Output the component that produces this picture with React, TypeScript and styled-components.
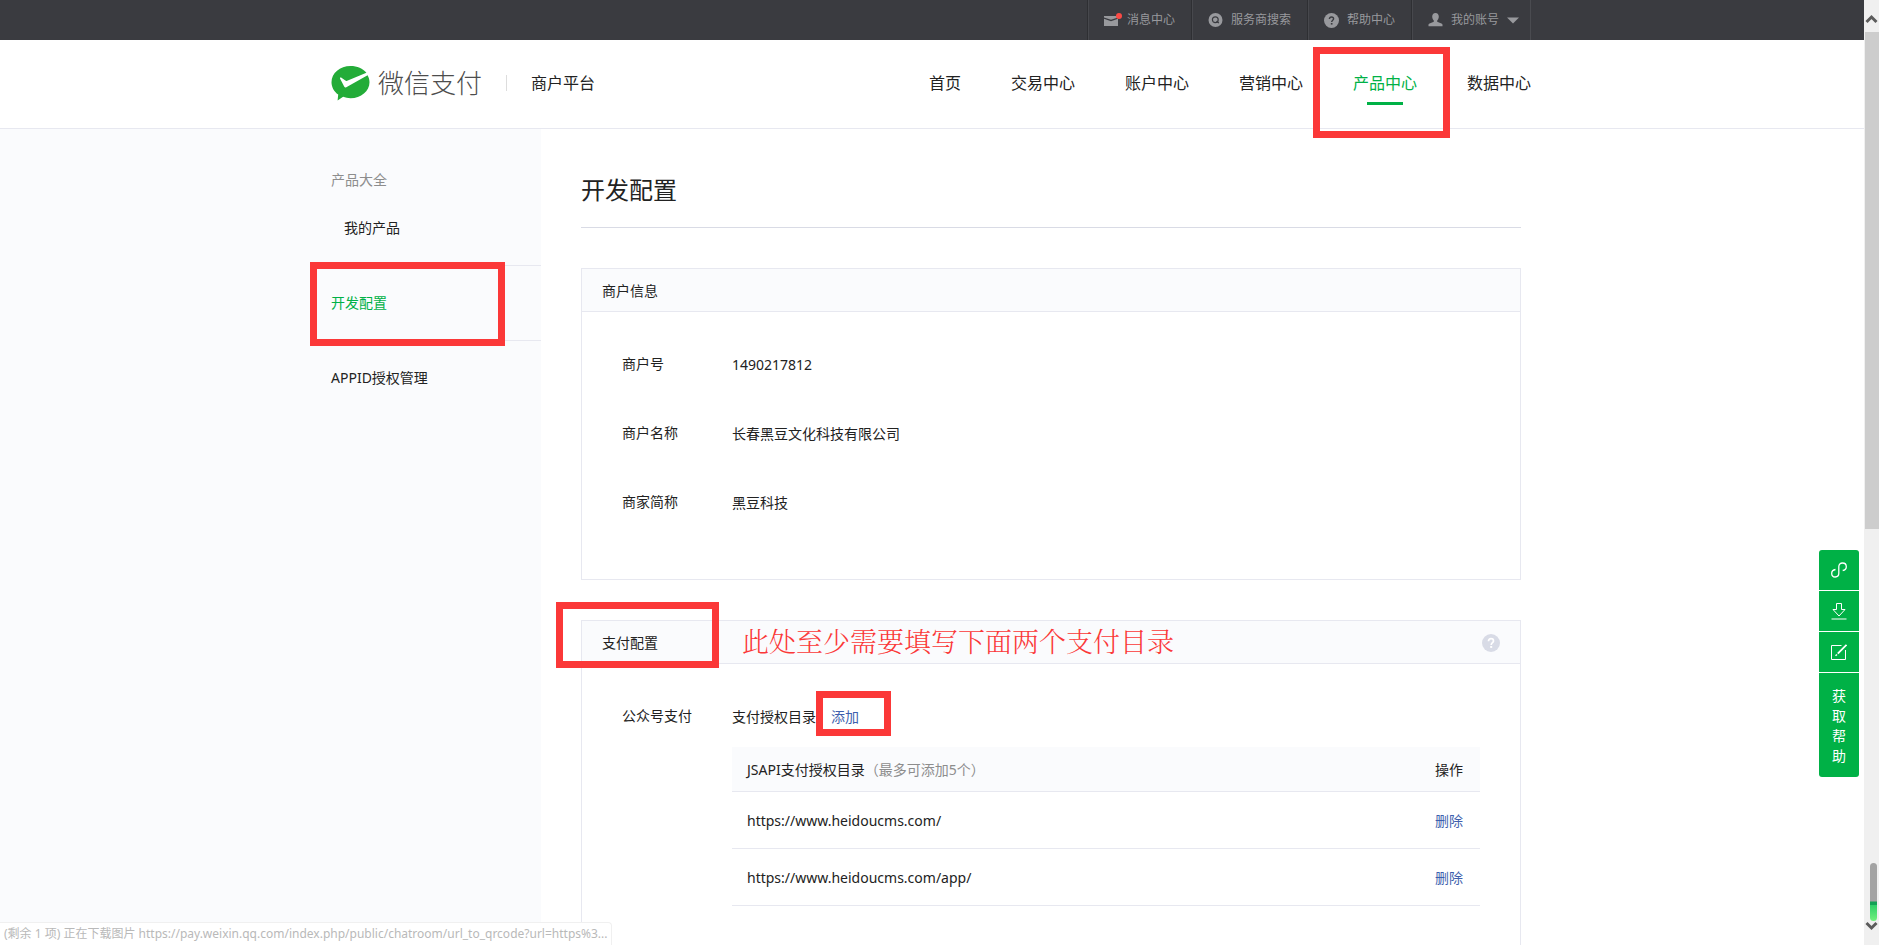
import React from "react";
import styled, { createGlobalStyle, css } from "styled-components";

const GREEN = "#00b146";
const RED = "#fb3838";
const LINE = "#e7e8f0";
const TINT = "#fafbfd";

const GlobalStyle = createGlobalStyle`
  * { box-sizing: border-box; }
  body {
    margin: 0;
    background: #fff;
    color: #222;
    font: 14px/20px "Noto Sans", "Noto Sans CJK SC", sans-serif;
  }
  a { color: inherit; text-decoration: none; }
  button { border: 0; padding: 0; background: none; font: inherit; color: inherit; cursor: pointer; }
  h1, h2, dl, dt, dd, ul, p { margin: 0; padding: 0; font-weight: 400; }
  ul { list-style: none; }
`;

const Shell = styled.div`
  display: flex;
  height: 100vh;
  overflow: hidden;
`;

const Page = styled.div`
  flex: 1;
  min-width: 0;
  display: flex;
  flex-direction: column;
`;

const Container = styled.div`
  width: 100%;
  max-width: 1202px;
  margin: 0 auto;
  padding-right: 2px;
  display: flex;
`;

const TopBar = styled.div`
  flex: none;
  background: #3a3b40;
  color: #98999d;
  font-size: 12px;
`;

const TopList = styled.ul`
  display: flex;
  margin-left: auto;
  border-right: 1px solid #4a4b50;
`;

const TopItem = styled.li`
  border-left: 1px solid #2e2f33;
  box-shadow: inset 1px 0 #47484d;
  a, button {
    display: flex;
    align-items: center;
    height: 40px;
    padding: 0 16px;
    gap: 8px;
  }
  button { padding-right: 11px; }
  svg { overflow: visible; }
`;

const Header = styled.header`
  flex: none;
  border-bottom: 1px solid ${LINE};
`;

const HeaderRow = styled(Container)`
  height: 88px;
  padding-bottom: 2px;
  align-items: center;
`;

const Brand = styled.a`
  display: flex;
  align-items: center;
`;

const BrandName = styled.span`
  margin-left: 8px;
  font-size: 26px;
  line-height: 32px;
  font-weight: 300;
  color: #4d4d4d;
`;

const BrandSite = styled.span`
  margin-left: 24px;
  padding-left: 24px;
  font-size: 16px;
  line-height: 16px;
  border-left: 1px solid #ddd;
`;

const Nav = styled.nav`
  display: flex;
  gap: 50px;
  margin-left: auto;
`;

const NavLink = styled.a<{ $active?: boolean }>`
  position: relative;
  font-size: 16px;
  line-height: 24px;
  ${(p) =>
    p.$active &&
    css`
      color: ${GREEN};
      &::after {
        content: "";
        position: absolute;
        left: 14px;
        top: 31px;
        width: 36px;
        height: 3px;
        background: ${GREEN};
      }
    `}
`;

const Mark = styled.span<{ $x: number; $y: number; $w: number; $h: number }>`
  position: absolute;
  z-index: 2;
  left: ${(p) => p.$x}px;
  top: ${(p) => p.$y}px;
  width: ${(p) => p.$w}px;
  height: ${(p) => p.$h}px;
  border: 7px solid ${RED};
  pointer-events: none;
`;

const Body = styled.div`
  flex: 1;
  display: flex;
`;

const Sidebar = styled.aside`
  width: calc(50% - 391px);
  min-width: 210px;
  display: flex;
  justify-content: flex-end;
  background: ${TINT};
`;

const Menu = styled.ul`
  width: 210px;
  padding-top: 40px;
`;

const MenuGroup = styled.li`
  position: relative;
  & + & {
    padding: 26px 0;
    border-top: 1px solid ${LINE};
  }
  &:first-child {
    height: 96px;
  }
`;

const MenuTitle = styled.p`
  line-height: 22px;
  color: #8d8d8d;
`;

const MenuLink = styled.a<{ $active?: boolean; $sub?: boolean }>`
  display: block;
  line-height: 22px;
  ${(p) => p.$active && `color: ${GREEN};`}
  ${(p) => p.$sub && "margin: 26px 0 0 13px;"}
`;

const Main = styled.main`
  flex: 1;
  max-width: 980px;
  padding: 40px 0 0 40px;
`;

const Title = styled.h1`
  font-size: 24px;
  line-height: 42px;
  padding-bottom: 16px;
  border-bottom: 1px solid #d9dbe5;
  margin-bottom: 40px;
`;

const Card = styled.section<{ $tall?: boolean }>`
  border: 1px solid ${LINE};
  margin-bottom: 40px;
  min-height: ${(p) => (p.$tall ? 480 : 312)}px;
`;

const CardHead = styled.div`
  position: relative;
  display: flex;
  align-items: center;
  height: 43px;
  padding: 2px 20px 0;
  background: ${TINT};
  border-bottom: 1px solid ${LINE};
  button { margin-left: auto; height: 18px; display: flex; }
`;

const CardTitle = styled.h2`
  font-size: 14px;
  line-height: 20px;
`;

const Note = styled.span`
  position: absolute;
  z-index: 2;
  left: 160px;
  top: 2px;
  font-size: 27px;
  line-height: 36px;
  font-family: "Noto Serif CJK SC", "Noto Sans CJK SC", serif;
  font-weight: 300;
  color: ${RED};
  white-space: nowrap;
`;

const Fields = styled.dl`
  padding: 42px 40px 0;
`;

const Field = styled.div`
  display: flex;
  margin-bottom: 48px;
  dt { width: 110px; flex: none; }
  dd { flex: 1; padding-top: 1px; }
`;

const AddLink = styled.a`
  position: relative;
  margin-left: 15px;
  color: #3e5fae;
`;

const DirTable = styled.table`
  width: 100%;
  margin-top: 20px;
  border-collapse: collapse;
  th, td {
    padding: 2px 15px 0;
    height: 57px;
    text-align: left;
    font-weight: 400;
    border-bottom: 1px solid ${LINE};
  }
  th { height: 44px; background: ${TINT}; }
  th:last-child, td:last-child { width: 60px; }
  small { font-size: 14px; color: #8d8d8d; }
  button { color: #3e5fae; }
`;

const Rail = styled.div`
  flex: none;
  width: 15px;
  background: #f0f0f0;
  display: flex;
  flex-direction: column;
  align-items: center;
  padding: 14px 0;
`;

const Thumb = styled.div`
  width: 100%;
  height: 497px;
  margin-top: 8px;
  border-left: 1px solid #f0f0f0;
  background: #cdcdcd;
`;

const Meter = styled.div`
  width: 7px;
  height: 58px;
  margin: auto 0 0 3px;
  border-radius: 4px;
  background: linear-gradient(#a3a3a3 38px, #12a155 39px, #12a155 42px, #2ecf68 42px, #74f07e);
`;

const HelpDock = styled.div`
  position: fixed;
  z-index: 3;
  right: 20px;
  top: 550px;
  width: 40px;
  display: flex;
  flex-direction: column;
  gap: 1px;
  border-radius: 3px;
  overflow: hidden;
  background: #fff;
`;

const DockButton = styled.button<{ $text?: boolean }>`
  && {
    display: flex;
    align-items: center;
    justify-content: center;
    height: ${(p) => (p.$text ? 104 : 40)}px;
    padding: ${(p) => (p.$text ? 2 : 0)}px 12px 0;
    color: #fff;
    background: ${GREEN};
    line-height: 20px;
  }
`;

const StatusBar = styled.div`
  position: fixed;
  left: 0;
  bottom: 0;
  z-index: 3;
  height: 23px;
  padding: 0 3px 0 4px;
  font-size: 12px;
  line-height: 22px;
  color: #b9b9b9;
  background: #fff;
  border: 1px solid #f0f0f0;
  border-width: 1px 1px 0 0;
  border-radius: 0 4px 0 0;
  white-space: nowrap;
`;

const MailIcon = () => (
  <svg width="15" height="18" viewBox="0 0 15 18">
    <path d="M0 5h14v1.500L7 8.800 0 6.500z" fill="#98999d" />
    <path d="M0 7.800l7 2.400 7-2.400V15H0z" fill="#98999d" />
    <circle cx="15" cy="5" r="3" fill="#fb4a45" />
  </svg>
);

const SearchIcon = () => (
  <svg width="15" height="15" viewBox="0 0 15 15">
    <circle cx="7.500" cy="7" r="7" fill="#98999d" />
    <circle cx="7.300" cy="6.800" r="2.900" fill="none" stroke="#3a3b40" strokeWidth="1.200" />
    <path d="M8.500 8.200l2.400 1.800" stroke="#3a3b40" strokeWidth="1.200" />
  </svg>
);

const QuestionIcon = ({ size, fill, ink }: { size: number; fill: string; ink: string }) => (
  <svg width={size} height={size} viewBox="0 0 18 18">
    <circle cx="9" cy="9" r="9" fill={fill} />
    <path d="M6.500 7.200C6.500 5.500 7.500 4.700 9 4.700s2.500.9 2.500 2.200c0 1.700-2.300 1.900-2.300 4" fill="none" stroke={ink} strokeWidth="1.700" />
    <rect x="8.200" y="12" width="2" height="1.900" fill={ink} />
  </svg>
);

const UserIcon = () => (
  <svg width="15" height="14" viewBox="0 0 15 14">
    <path d="M7.500 0c2.100 0 3.300 1.500 3.300 3.600 0 1.700-.7 3.100-1.600 3.900v1.300l4.200 1.600c.8.3 1.100.8 1.100 1.600v1.200H.5V12c0-.8.3-1.300 1.100-1.600l4.200-1.600V7.500C4.900 6.700 4.200 5.300 4.200 3.600 4.200 1.500 5.400 0 7.500 0z" fill="#98999d" />
  </svg>
);

const CaretIcon = () => (
  <svg width="12" height="6" viewBox="0 0 12 6">
    <path d="M0 .5h12l-6 6z" fill="#98999d" />
  </svg>
);

const LogoIcon = () => (
  <svg width="39" height="35" viewBox="0 0 39 35">
    <path d="M19.500 0C9 0 .5 7.200.5 16.200c0 5 2.600 9.400 6.700 12.300L6.600 34.500l5.500-3.700c2.300.9 4.800 1.400 7.400 1.400 10.500 0 19-7.100 19-16 0-2.500-.7-4.900-1.900-7L15.300 21.200c-.8.400-1.500.3-2-.5L9 12.400c-.3-.8.400-1.300 1.100-.8l4.300 3c.6.400 1.200.4 1.800.1L35.400 6.800C32 2.700 26.200 0 19.500 0z" fill="#23ac38" />
  </svg>
);

const LinkIcon = () => (
  <svg width="16" height="16" viewBox="0 0 16 16" fill="none" stroke="#fff" strokeWidth="1.300">
    <path d="M4.500 7.500C2 7.900.7 9.200.7 11.200c0 2.300 1.500 3.800 3.500 3.800S7.800 13.500 7.800 11.300V4.700C7.800 2.500 9.300 1 11.500 1s3.800 1.500 3.800 3.700c0 2-1.300 3.400-3.600 3.800" />
  </svg>
);

const DownloadIcon = () => (
  <svg width="16" height="18" viewBox="0 0 16 18" fill="none" stroke="#fff">
    <path d="M5.500 1.500h5v6H14L8 14 2 7.500h3.500zM.5 17h15" />
  </svg>
);

const EditIcon = () => (
  <svg width="16" height="16" viewBox="0 0 16 16" fill="none" stroke="#fff">
    <path d="M10.500 1.500h-10v14h14V6" />
    <path d="M15.500.8L6.800 9.700" strokeWidth="1.800" />
    <path d="M6 10.500l-1.500 1.300" strokeWidth="1.500" />
  </svg>
);

const Chevron = ({ up }: { up?: boolean }) => (
  <svg width="13" height="10" viewBox="0 0 13 10">
    <path d={up ? "M1.500 8L6.500 3l5 5" : "M1.500 2l5 5 5-5"} fill="none" stroke="#5c5c5c" strokeWidth="3" />
  </svg>
);

const NAV = ["首页", "交易中心", "账户中心", "营销中心", "产品中心", "数据中心"];

const MERCHANT = [
  ["商户号", "1490217812"],
  ["商户名称", "长春黑豆文化科技有限公司"],
  ["商家简称", "黑豆科技"],
];

const DIRECTORIES = ["https://www.heidoucms.com/", "https://www.heidoucms.com/app/"];

export default function App() {
  return (
    <Shell>
      <GlobalStyle />
      <Page>
        <TopBar>
          <Container>
            <TopList>
              <TopItem><a href="#messages"><MailIcon />消息中心</a></TopItem>
              <TopItem><a href="#providers"><SearchIcon />服务商搜索</a></TopItem>
              <TopItem><a href="#help"><QuestionIcon size={15} fill="#98999d" ink="#3a3b40" />帮助中心</a></TopItem>
              <TopItem><button type="button"><UserIcon />我的账号<CaretIcon /></button></TopItem>
            </TopList>
          </Container>
        </TopBar>

        <Header>
          <HeaderRow>
            <Brand href="#home">
              <LogoIcon />
              <BrandName>微信支付</BrandName>
              <BrandSite>商户平台</BrandSite>
            </Brand>
            <Nav>
              {NAV.map((label) => (
                <NavLink key={label} href="#nav" $active={label === "产品中心"}>
                  {label}
                  {label === "产品中心" && <Mark $x={-40} $y={-24} $w={137} $h={91} />}
                </NavLink>
              ))}
            </Nav>
          </HeaderRow>
        </Header>

        <Body>
          <Sidebar>
            <Menu>
              <MenuGroup>
                <MenuTitle>产品大全</MenuTitle>
                <MenuLink href="#mine" $sub>我的产品</MenuLink>
              </MenuGroup>
              <MenuGroup>
                <MenuLink href="#dev" $active>开发配置</MenuLink>
                <Mark $x={-21} $y={-4} $w={195} $h={84} />
              </MenuGroup>
              <MenuGroup>
                <MenuLink href="#appid">APPID授权管理</MenuLink>
              </MenuGroup>
            </Menu>
          </Sidebar>

          <Main>
            <Title>开发配置</Title>

            <Card>
              <CardHead><CardTitle>商户信息</CardTitle></CardHead>
              <Fields>
                {MERCHANT.map(([name, value]) => (
                  <Field key={name}>
                    <dt>{name}</dt>
                    <dd>{value}</dd>
                  </Field>
                ))}
              </Fields>
            </Card>

            <Card $tall>
              <CardHead>
                <CardTitle>支付配置</CardTitle>
                <Mark $x={-26} $y={-19} $w={163} $h={66} />
                <Note>此处至少需要填写下面两个支付目录</Note>
                <button type="button" aria-label="帮助">
                  <QuestionIcon size={18} fill="#d8dbe6" ink="#fff" />
                </button>
              </CardHead>
              <Fields>
                <Field>
                  <dt>公众号支付</dt>
                  <dd>
                    支付授权目录
                    <AddLink href="#add">
                      添加
                      <Mark $x={-15} $y={-16} $w={75} $h={45} />
                    </AddLink>
                    <DirTable>
                      <thead>
                        <tr>
                          <th>JSAPI支付授权目录<small>（最多可添加5个）</small></th>
                          <th>操作</th>
                        </tr>
                      </thead>
                      <tbody>
                        {DIRECTORIES.map((url) => (
                          <tr key={url}>
                            <td>{url}</td>
                            <td><button type="button">删除</button></td>
                          </tr>
                        ))}
                      </tbody>
                    </DirTable>
                  </dd>
                </Field>
              </Fields>
            </Card>
          </Main>
        </Body>
      </Page>

      <Rail aria-hidden="true">
        <Chevron up />
        <Thumb />
        <Meter />
        <Chevron />
      </Rail>

      <HelpDock>
        <DockButton type="button" aria-label="链接"><LinkIcon /></DockButton>
        <DockButton type="button" aria-label="下载"><DownloadIcon /></DockButton>
        <DockButton type="button" aria-label="反馈"><EditIcon /></DockButton>
        <DockButton type="button" $text>获取帮助</DockButton>
      </HelpDock>

      <StatusBar>(剩余 1 项) 正在下载图片 https://pay.weixin.qq.com/index.php/public/chatroom/url_to_qrcode?url=https%3...</StatusBar>
    </Shell>
  );
}
